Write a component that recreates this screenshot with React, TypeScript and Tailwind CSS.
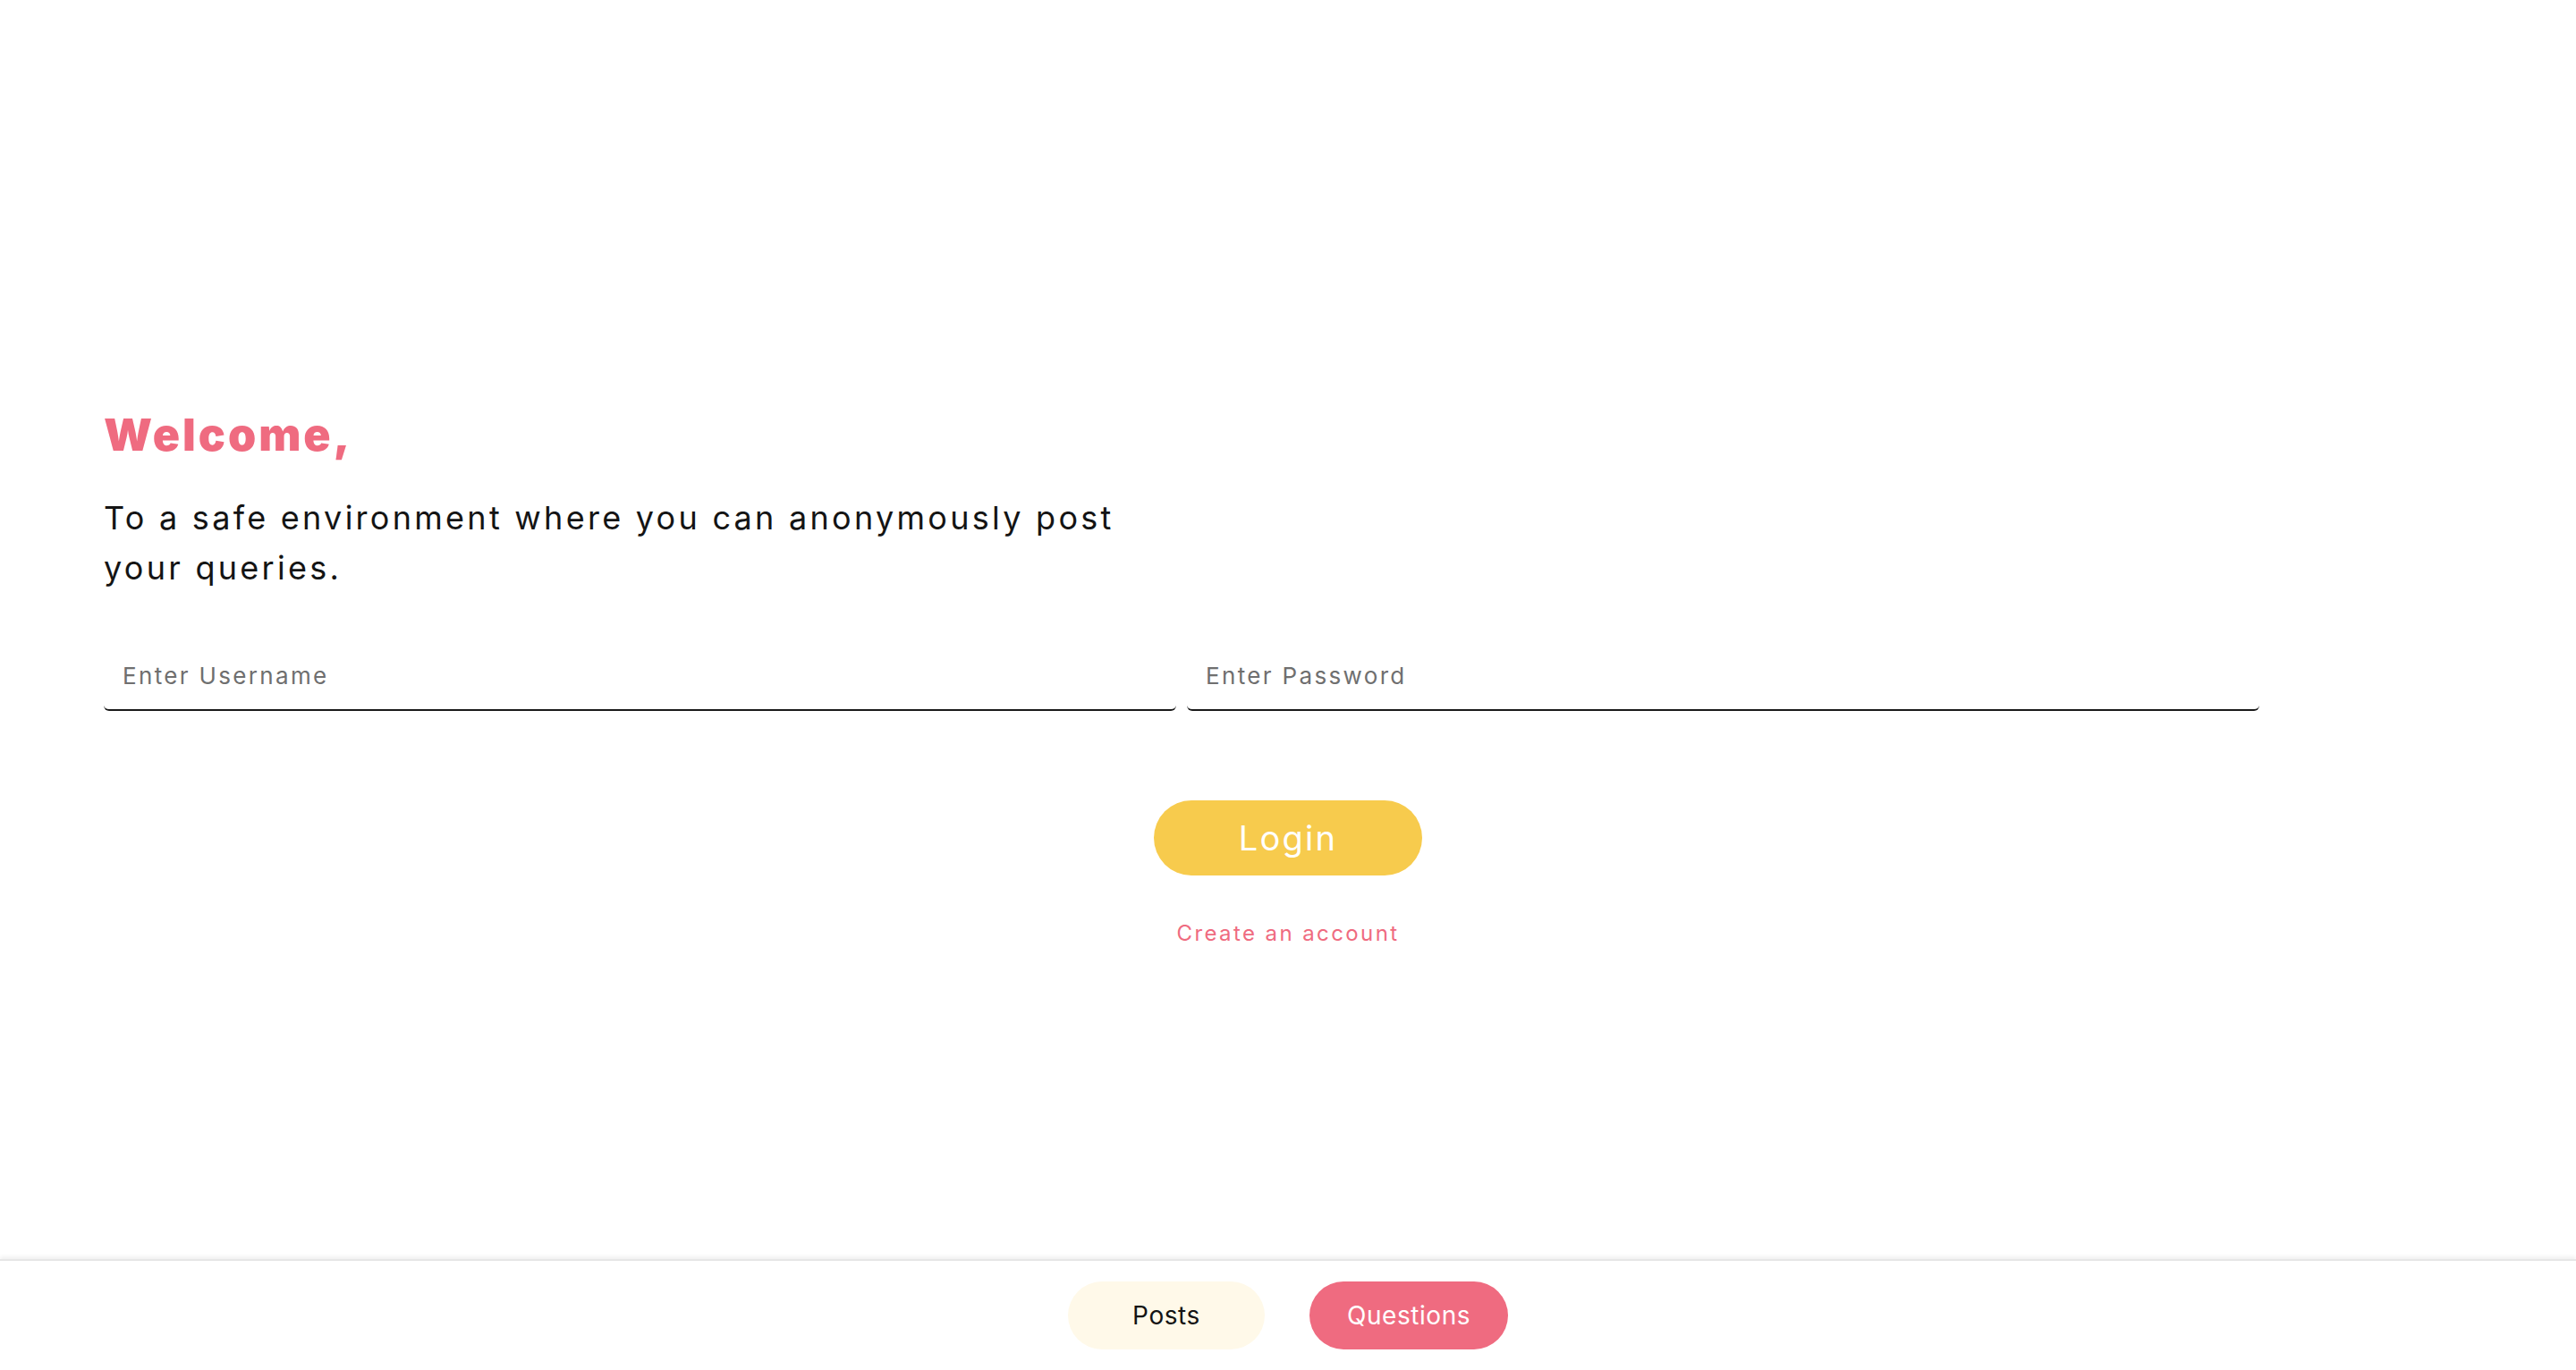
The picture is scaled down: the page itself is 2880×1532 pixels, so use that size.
export default function App() {
  return (
    <div className="h-screen flex flex-col bg-white font-['Inter','Noto_Sans',sans-serif] overflow-hidden">
      {/* login */}
      <main className="flex-1 pl-[116px] pt-[456px]">
        <h1 className="text-[50px] leading-[60px] font-black tracking-[0.06em] text-[#ef6b80]">
          Welcome,
        </h1>
        <p className="mt-[35px] w-[1180px] text-[36px] leading-[56px] tracking-[0.091em] text-[#141414]">
          To a safe environment where you can anonymously post your queries.
        </p>

        <div className="mt-[55px] flex gap-[12px]">
          <input
            type="text"
            placeholder="Enter Username"
            className="w-[1199px] h-[77px] pl-[21px] text-[26px] tracking-[0.09em] border-b-2 border-[#1a1a1a] rounded-md outline-none placeholder:text-[#6f6f6f]"
          />
          <input
            type="password"
            placeholder="Enter Password"
            className="w-[1199px] h-[77px] pl-[21px] text-[26px] tracking-[0.09em] border-b-2 border-[#1a1a1a] rounded-md outline-none placeholder:text-[#6f6f6f]"
          />
        </div>

        <div className="flex flex-col items-center pr-[116px]">
          <button className="mt-[100px] w-[300px] h-[84px] rounded-full bg-[#f7cb4d] text-white text-[38px] tracking-[0.06em]">
            Login
          </button>
          <a href="#" className="mt-[50px] text-[24px] leading-[30px] tracking-[0.1em] text-[#ef6b80]">
            Create an account
          </a>
        </div>
      </main>

      {/* bottom nav */}
      <nav className="h-[124px] shrink-0 flex justify-center items-center gap-[50px] border-t-2 border-[#e6e6e6] shadow-[0_-3px_4px_rgba(0,0,0,0.06)]">
        <button className="w-[220px] h-[76px] rounded-full bg-[#fff9e9] text-[28px] tracking-[0.02em] text-[#141414]">
          Posts
        </button>
        <button className="w-[222px] h-[76px] rounded-full bg-[#ef6b80] text-[28px] tracking-[0.02em] text-white">
          Questions
        </button>
      </nav>
    </div>
  );
}
